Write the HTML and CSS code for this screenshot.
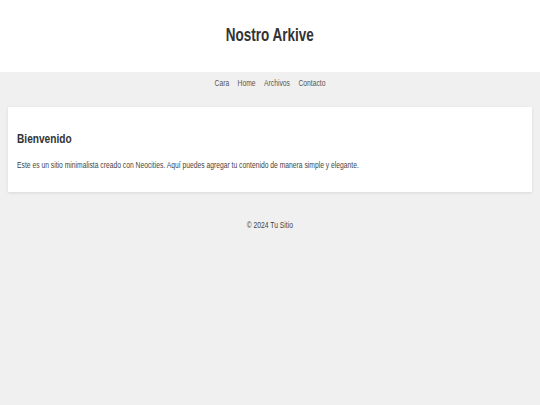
FILE: index.html
```html
<!DOCTYPE html>
<html lang="es">
<head>
<meta charset="utf-8">
<title>Nostro Arkive</title>
<link rel="stylesheet" href="styles.css">
</head>
<body>
<header class="site-header">
  <h1 class="site-title">Nostro Arkive</h1>
</header>
<nav class="site-nav">
  <a href="#">Cara</a>
  <a href="#">Home</a>
  <a href="#">Archivos</a>
  <a href="#">Contacto</a>
</nav>
<main class="content">
  <section class="card">
    <h2 class="card-title">Bienvenido</h2>
    <p class="card-text">Este es un sitio minimalista creado con Neocities. Aquí puedes agregar tu contenido de manera simple y elegante.</p>
  </section>
</main>
<footer class="site-footer"><span class="footer-text">© 2024 Tu Sitio</span></footer>
</body>
</html>
```
FILE: styles.css
```css
html, body {
  margin: 0;
  padding: 0;
}
body {
  background: #f0f0f0;
  color: #333;
  font-family: "Liberation Sans", Arial, sans-serif;
  min-height: 405px;
}
.site-header {
  background: #fff;
  height: 72px;
  box-sizing: border-box;
  padding-top: 24px;
  text-align: center;
}
.site-title {
  display: inline-block;
  margin: 0;
  font-size: 18px;
  line-height: 22px;
  font-weight: bold;
  color: #333;
  transform: scaleX(0.75);
}
.site-nav {
  display: flex;
  justify-content: center;
  gap: 11.3px;
  height: 35px;
  box-sizing: border-box;
  padding-top: 6px;
  transform: scaleX(0.75);
}
.site-nav a {
  color: #555;
  text-decoration: none;
  font-size: 9px;
  line-height: 10px;
}
.content {
  padding: 0 8px;
}
.card {
  background: #fff;
  padding: 24px 9px 21px;
  box-shadow: 0 1px 3px rgba(0, 0, 0, 0.1);
}
.card-title {
  margin: 0 0 12px;
  font-size: 13.5px;
  line-height: 16px;
  font-weight: bold;
  color: #333;
  transform: scaleX(0.75);
  transform-origin: left center;
}
.card-text {
  margin: 0;
  font-size: 9px;
  line-height: 12px;
  color: #444;
  width: 133.33%;
  transform: scaleX(0.75);
  transform-origin: left center;
}
.site-footer {
  display: flex;
  justify-content: center;
  padding-top: 27px;
}
.footer-text {
  font-size: 9px;
  line-height: 12px;
  color: #444;
  transform: scaleX(0.75);
}
```
